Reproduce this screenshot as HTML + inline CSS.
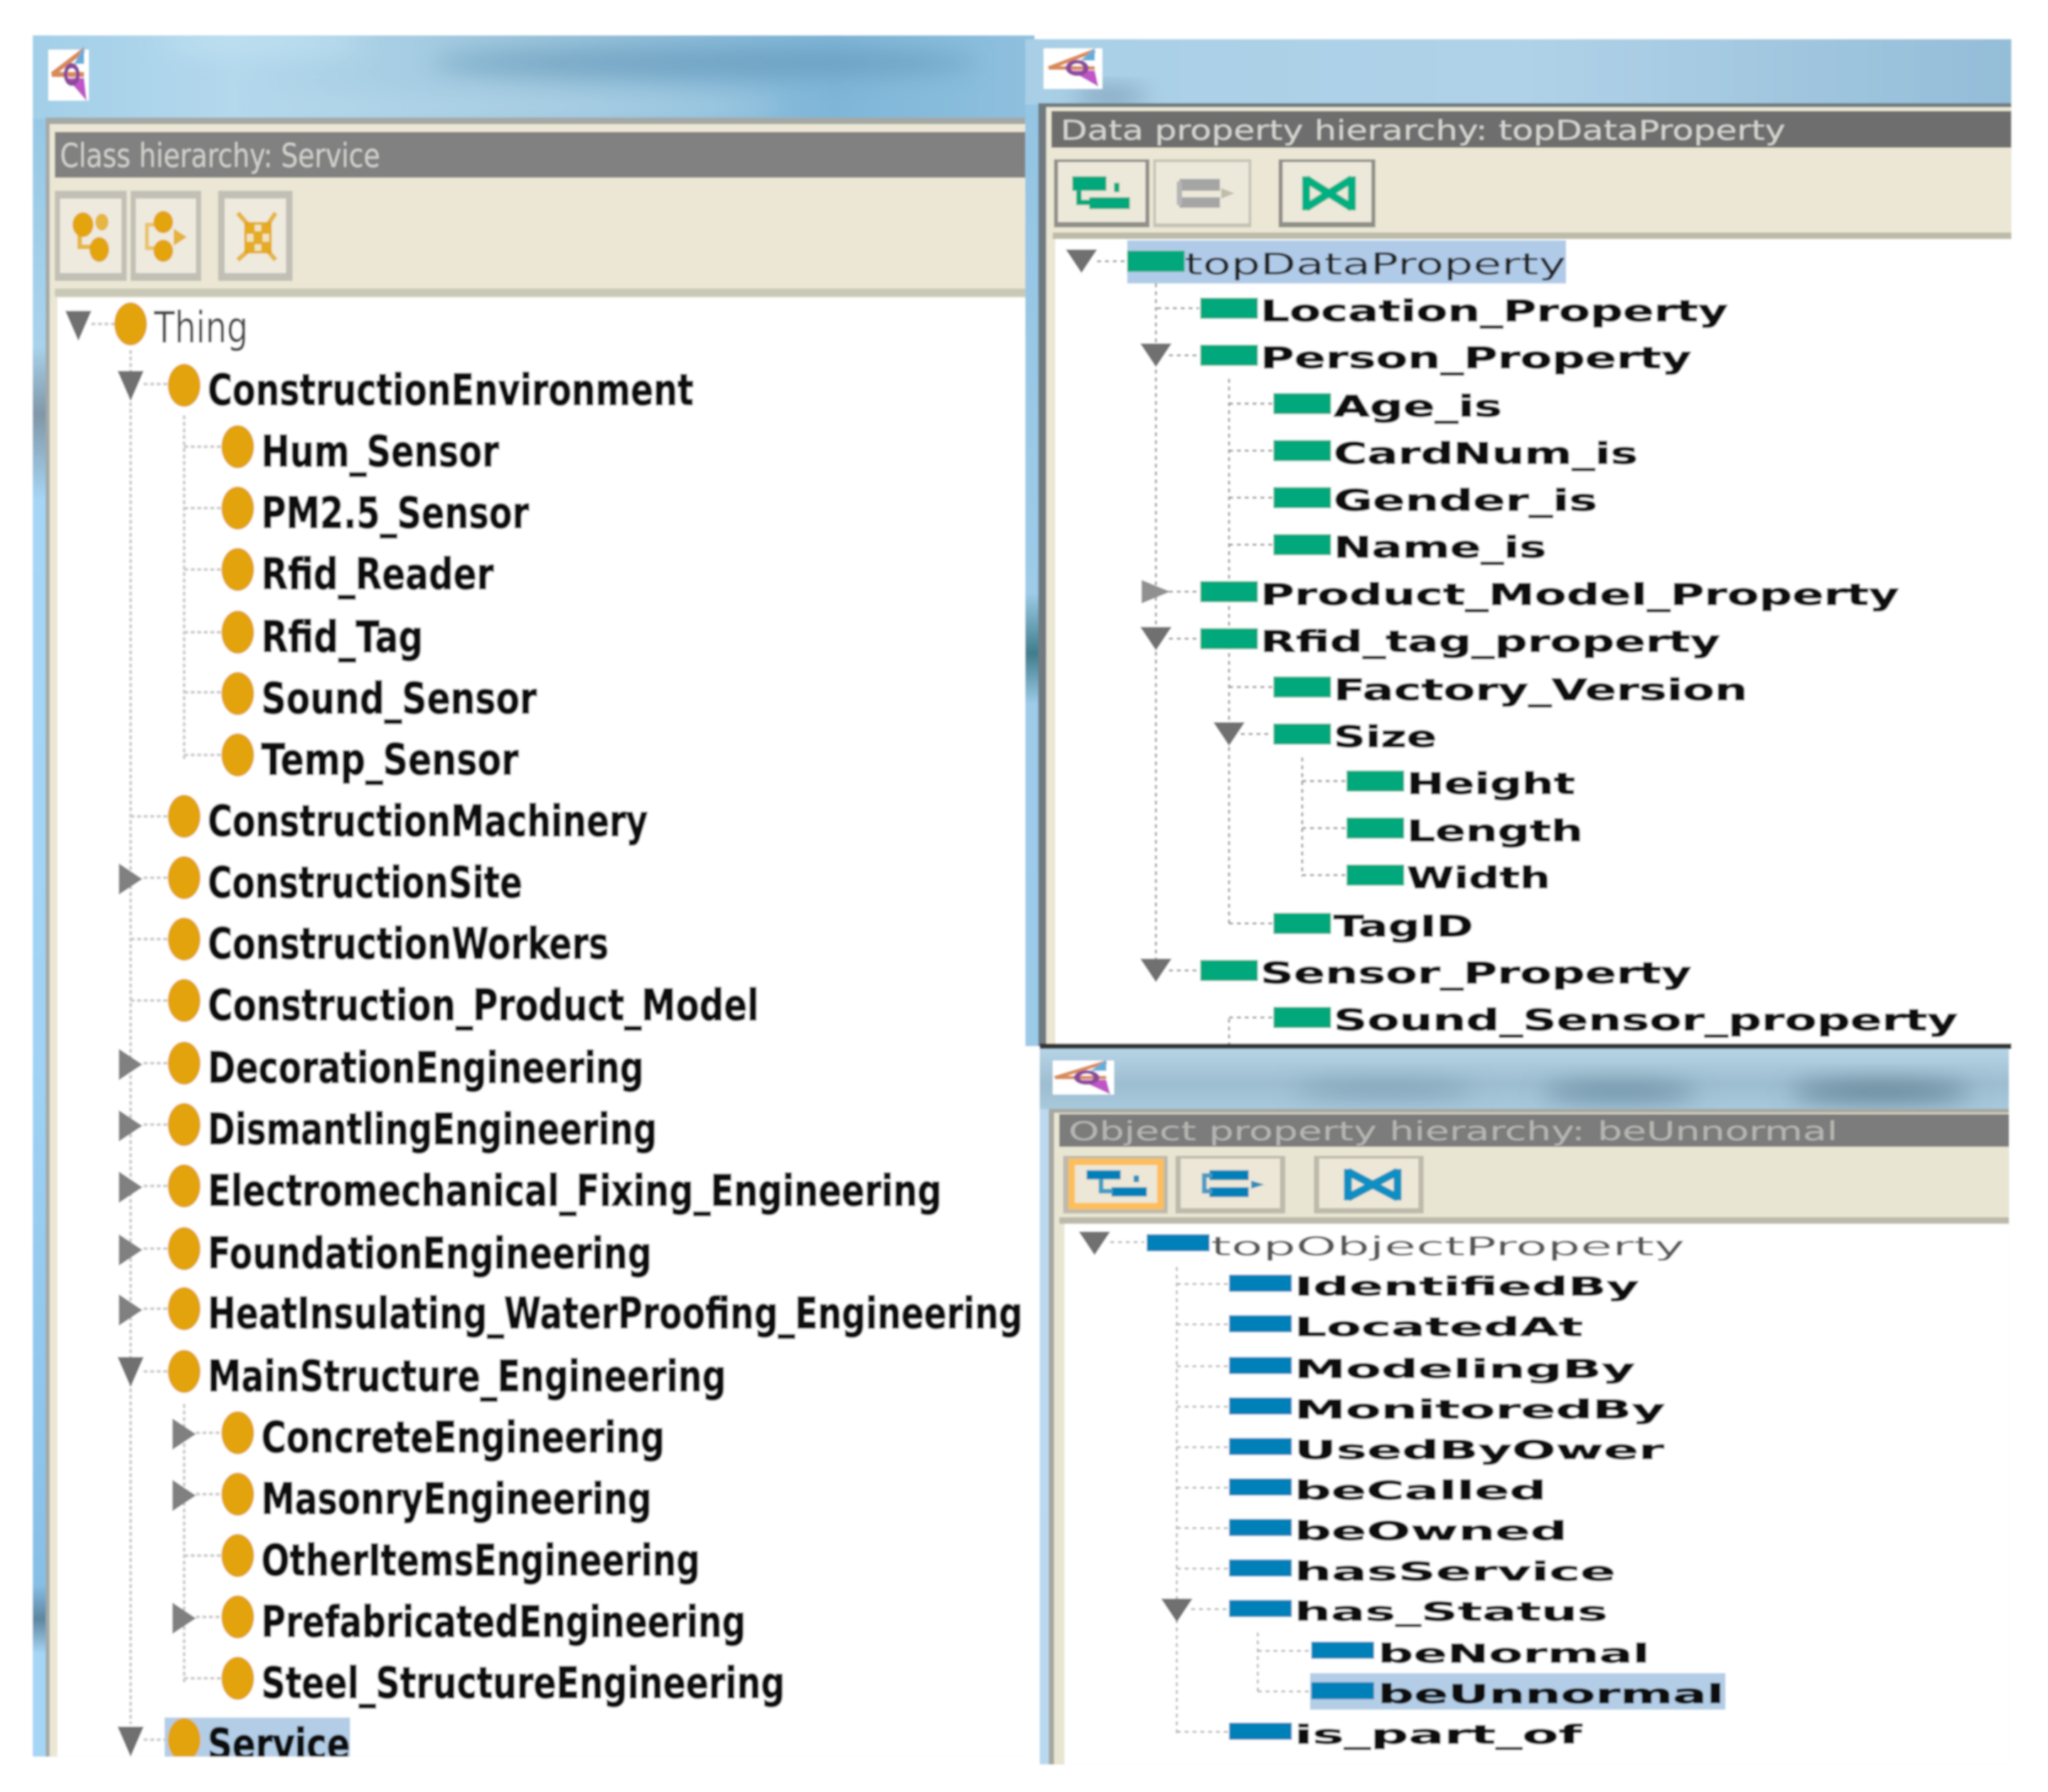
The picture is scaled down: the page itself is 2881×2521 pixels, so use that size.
<!DOCTYPE html>
<html><head><meta charset="utf-8"><title>Ontology hierarchies</title>
<style>
html,body{margin:0;padding:0;background:#fff}
svg{display:block}
text{font-family:"DejaVu Sans","Liberation Sans",sans-serif}
.l{font-size:33px;font-weight:bold;fill:#111;stroke:#111;stroke-width:.7px}
.r{font-size:23px;font-weight:bold;fill:#0c0c0c;stroke:#0c0c0c;stroke-width:.45px}
.o{font-size:20px;font-weight:bold;fill:#111;stroke:#111;stroke-width:.35px}
</style></head><body>
<svg xmlns="http://www.w3.org/2000/svg" width="2881" height="2521" viewBox="0 0 1568 1372">
<defs>
<filter id="b" x="0" y="0" width="100%" height="100%"><feGaussianBlur stdDeviation="0.75"/></filter>
<filter id="bb" x="-30%" y="-100%" width="160%" height="300%"><feGaussianBlur stdDeviation="9"/></filter>
<linearGradient id="t1" x1="0" x2="1" y1="0" y2="0"><stop offset="0" stop-color="#a2cfe8"/><stop offset=".2" stop-color="#b4d8ec"/><stop offset=".5" stop-color="#9cc5dc"/><stop offset=".8" stop-color="#7fb6d8"/><stop offset="1" stop-color="#8fc0de"/></linearGradient>
<linearGradient id="t2" x1="0" x2="1" y1="0" y2="0"><stop offset="0" stop-color="#a8cfe6"/><stop offset=".5" stop-color="#b0d2e8"/><stop offset="1" stop-color="#94bdd8"/></linearGradient>
<linearGradient id="t3" x1="0" x2="0" y1="0" y2="1"><stop offset="0" stop-color="#b8d6e8"/><stop offset=".6" stop-color="#9dbdd0"/><stop offset="1" stop-color="#a8c8dc"/></linearGradient>
<linearGradient id="s1" x1="0" x2="0" y1="0" y2="1"><stop offset="0" stop-color="#8fc4e2"/><stop offset=".18" stop-color="#a9d3ec"/><stop offset=".22" stop-color="#7f97a8"/><stop offset=".27" stop-color="#a6d6f5"/><stop offset=".6" stop-color="#9fd2f4"/><stop offset=".9" stop-color="#86bfe6"/><stop offset=".92" stop-color="#5d86a0"/><stop offset=".94" stop-color="#a6d6f5"/><stop offset="1" stop-color="#a6d6f5"/></linearGradient>
<linearGradient id="s2" x1="0" x2="0" y1="0" y2="1"><stop offset="0" stop-color="#93c4e2"/><stop offset=".55" stop-color="#9dcbe8"/><stop offset=".61" stop-color="#3f7d8c"/><stop offset=".66" stop-color="#9dcbe8"/><stop offset="1" stop-color="#9ccbea"/></linearGradient>
<linearGradient id="s3" x1="0" x2="0" y1="0" y2="1"><stop offset="0" stop-color="#c8dff0"/><stop offset=".04" stop-color="#6f8ea6"/><stop offset=".09" stop-color="#bcd9ee"/><stop offset="1" stop-color="#b8d8f0"/></linearGradient>
<g id="dn"><path d="M-10-11H10L0 12Z" fill="#707070"/></g>
<g id="rt"><path d="M-9-12L9 0L-9 12Z" fill="#808080"/></g>
<g id="dns"><path d="M-12-8H12L0 10Z" fill="#707070"/></g>
<g id="rts"><path d="M-11-9L11 0L-11 9Z" fill="#909090"/></g>
<g id="c"><ellipse rx="12.5" ry="16.5" fill="#e2a30e"/></g>
<g id="g"><rect x="-22" y="-8" width="44" height="16" fill="#00a87c"/></g>
<g id="u"><rect x="-24" y="-7" width="48" height="13" fill="#0080b8"/></g>
<g id="owl"><path d="M12-14L-14 0L12 0" fill="none" stroke="#d98a55" stroke-width="3"/><path d="M12-16L4-6L12-6Z" fill="#62aedb"/><path d="M-2 2L14 15L12 2Z" fill="#c055c8"/><circle cx="2" cy="0" r="5" fill="none" stroke="#8a4a9a" stroke-width="3"/></g>
</defs>
<rect width="1568" height="1372" fill="#fff"/>
<g filter="url(#b)">
<!-- LEFT WINDOW -->
<rect x="25" y="27" width="767" height="1318" fill="#fff"/>
<rect x="25" y="27" width="13" height="1318" fill="url(#s1)"/>
<rect x="25" y="27" width="767" height="64" fill="url(#t1)"/>
<g filter="url(#bb)" opacity=".6"><ellipse cx="540" cy="48" rx="210" ry="11" fill="#5f92b4"/><ellipse cx="200" cy="32" rx="80" ry="10" fill="#c4e4f4"/><ellipse cx="400" cy="82" rx="200" ry="8" fill="#bcdcee"/></g>
<rect x="37" y="38" width="31" height="39" fill="#fff"/>
<use href="#owl" transform="translate(53 57) scale(.95 1.35)"/>
<rect x="35" y="90" width="750" height="1255" fill="#a4a9a6"/>
<rect x="38" y="95" width="747" height="1250" fill="#ebe7d4"/>
<rect x="42" y="101" width="743" height="35" fill="#818181"/>
<text x="46" y="128" font-size="25" fill="#d0d0cc" textLength="245" lengthAdjust="spacingAndGlyphs">Class hierarchy: Service</text>
<rect x="42" y="146" width="55" height="69" fill="#c2c0b6"/><rect x="46" y="152" width="47" height="57" fill="#eeeade"/>
<rect x="100" y="146" width="54" height="69" fill="#c2c0b6"/><rect x="104" y="152" width="46" height="57" fill="#eeeade"/>
<rect x="167" y="146" width="57" height="69" fill="#c2c0b6"/><rect x="172" y="152" width="47" height="57" fill="#eeeade"/>
<g fill="#e3a40f">
<ellipse cx="63.500" cy="172" rx="8" ry="9.500"/><ellipse cx="76" cy="191" rx="7.500" ry="9.500"/><ellipse cx="78" cy="170" rx="5" ry="6.500" opacity=".75"/>
<path d="M61 180V189H70" fill="none" stroke="#e3a40f" stroke-width="3.500" opacity=".75"/>
<ellipse cx="125" cy="170" rx="7.500" ry="8.500"/><ellipse cx="125" cy="192" rx="7.500" ry="8.500"/>
<path d="M120 172H112.500V190H120" fill="none" stroke="#e3a40f" stroke-width="3" opacity=".55"/><path d="M133 175L143 181.500L133 188Z" opacity=".8"/>
<rect x="187" y="170" width="21" height="24" opacity=".9"/>
<path d="M182 163L190 172M211 163L205 172M182 199L190 192M211 199L205 192" stroke="#e3a40f" stroke-width="3.500" opacity=".75"/>
</g>
<g fill="#f0e4c0"><rect x="195" y="172" width="5" height="5"/><rect x="195" y="187" width="5" height="5"/><rect x="189" y="179" width="5" height="6"/><rect x="201" y="179" width="5" height="6"/></g>
<rect x="42" y="221" width="743" height="6" fill="#c9c7b6"/>
<rect x="44" y="228" width="752" height="1117" fill="#fff"/>
<rect x="126" y="1315" width="142" height="30" fill="#b3cde6"/>
<g stroke="#c8c8c8" stroke-width="2" stroke-dasharray="3 2" fill="none">
<path d="M100 268V1320M141 318V581M141 1075V1288"/>
<path d="M70 248H88M110 294H129M141 342H170M141 389H170M141 436H170M141 484H170M141 530H170M141 578H170M100 625H129M110 672H129M100 719H129M100 766H129M110 814H129M110 861H129M110 908H129M110 956H129M110 1002H129M110 1050H129M150 1097H170M150 1144H170M141 1191H170M150 1238H170M141 1285H170M110 1332H126"/>
</g>
<use href="#dn" x="60" y="249"/><use href="#dn" x="100" y="295"/>
<use href="#rt" x="100" y="673"/><use href="#rt" x="100" y="815"/><use href="#rt" x="100" y="862"/><use href="#rt" x="100" y="909"/><use href="#rt" x="100" y="957"/><use href="#rt" x="100" y="1003"/>
<use href="#dn" x="100" y="1050"/><use href="#rt" x="141" y="1098"/><use href="#rt" x="141" y="1145"/><use href="#rt" x="141" y="1239"/><use href="#dn" x="100" y="1333"/>
<use href="#c" x="100" y="248"/><use href="#c" x="141" y="295"/>
<use href="#c" x="182" y="342"/><use href="#c" x="182" y="389"/><use href="#c" x="182" y="436"/><use href="#c" x="182" y="484"/><use href="#c" x="182" y="531"/><use href="#c" x="182" y="578"/>
<use href="#c" x="141" y="625"/><use href="#c" x="141" y="672"/><use href="#c" x="141" y="719"/><use href="#c" x="141" y="766"/><use href="#c" x="141" y="814"/><use href="#c" x="141" y="861"/><use href="#c" x="141" y="908"/><use href="#c" x="141" y="956"/><use href="#c" x="141" y="1002"/><use href="#c" x="141" y="1050"/>
<use href="#c" x="182" y="1097"/><use href="#c" x="182" y="1144"/><use href="#c" x="182" y="1191"/><use href="#c" x="182" y="1238"/><use href="#c" x="182" y="1285"/><use href="#c" x="141" y="1332"/>
<text x="118" y="262" font-size="33" fill="#444" textLength="72" lengthAdjust="spacingAndGlyphs">Thing</text>
<g transform="translate(0 2)">
<text class="l" x="159" y="308" textLength="372" lengthAdjust="spacingAndGlyphs">ConstructionEnvironment</text>
<text class="l" x="200" y="355" textLength="182" lengthAdjust="spacingAndGlyphs">Hum_Sensor</text>
<text class="l" x="200" y="402" textLength="205" lengthAdjust="spacingAndGlyphs">PM2.5_Sensor</text>
<text class="l" x="200" y="449" textLength="178" lengthAdjust="spacingAndGlyphs">Rfid_Reader</text>
<text class="l" x="200" y="497" textLength="124" lengthAdjust="spacingAndGlyphs">Rfid_Tag</text>
<text class="l" x="200" y="544" textLength="211" lengthAdjust="spacingAndGlyphs">Sound_Sensor</text>
<text class="l" x="200" y="591" textLength="197" lengthAdjust="spacingAndGlyphs">Temp_Sensor</text>
<text class="l" x="159" y="638" textLength="337" lengthAdjust="spacingAndGlyphs">ConstructionMachinery</text>
<text class="l" x="159" y="685" textLength="241" lengthAdjust="spacingAndGlyphs">ConstructionSite</text>
<text class="l" x="159" y="732" textLength="307" lengthAdjust="spacingAndGlyphs">ConstructionWorkers</text>
<text class="l" x="159" y="779" textLength="422" lengthAdjust="spacingAndGlyphs">Construction_Product_Model</text>
<text class="l" x="159" y="827" textLength="334" lengthAdjust="spacingAndGlyphs">DecorationEngineering</text>
<text class="l" x="159" y="874" textLength="344" lengthAdjust="spacingAndGlyphs">DismantlingEngineering</text>
<text class="l" x="159" y="921" textLength="562" lengthAdjust="spacingAndGlyphs">Electromechanical_Fixing_Engineering</text>
<text class="l" x="159" y="969" textLength="340" lengthAdjust="spacingAndGlyphs">FoundationEngineering</text>
<text class="l" x="159" y="1015" textLength="624" lengthAdjust="spacingAndGlyphs">HeatInsulating_WaterProofing_Engineering</text>
<text class="l" x="159" y="1063" textLength="397" lengthAdjust="spacingAndGlyphs">MainStructure_Engineering</text>
<text class="l" x="200" y="1110" textLength="309" lengthAdjust="spacingAndGlyphs">ConcreteEngineering</text>
<text class="l" x="200" y="1157" textLength="299" lengthAdjust="spacingAndGlyphs">MasonryEngineering</text>
<text class="l" x="200" y="1204" textLength="336" lengthAdjust="spacingAndGlyphs">OtherItemsEngineering</text>
<text class="l" x="200" y="1251" textLength="371" lengthAdjust="spacingAndGlyphs">PrefabricatedEngineering</text>
<text class="l" x="200" y="1298" textLength="401" lengthAdjust="spacingAndGlyphs">Steel_StructureEngineering</text>
<text class="l" x="159" y="1345" textLength="109" lengthAdjust="spacingAndGlyphs">Service</text>
</g>
<rect x="0" y="1345" width="800" height="27" fill="#fff"/>
<rect x="0" y="0" width="25" height="1372" fill="#fff"/>
<rect x="0" y="0" width="1568" height="27" fill="#fff"/>

<!-- TOP RIGHT WINDOW -->
<rect x="785" y="30" width="11" height="771" fill="url(#s2)"/>
<rect x="785" y="30" width="755" height="50" fill="url(#t2)"/>
<g filter="url(#bb)"><ellipse cx="850" cy="74" rx="28" ry="5" fill="#6f8fa6"/></g>
<rect x="799" y="37" width="45" height="31" fill="#fff"/>
<use href="#owl" transform="translate(822 52) scale(1.35 .95)"/>
<rect x="795" y="79" width="745" height="722" fill="#6f7a80"/>
<rect x="801" y="82" width="739" height="719" fill="#ebe7d4"/>
<rect x="805" y="85" width="735" height="28" fill="#6e6e6e"/>
<text x="812" y="107" font-size="21" fill="#d4d4d0" textLength="555" lengthAdjust="spacingAndGlyphs">Data property hierarchy: topDataProperty</text>
<rect x="807" y="122" width="73" height="52" fill="#8f8f88"/><rect x="810" y="124" width="67" height="46" fill="#ece8da"/>
<rect x="883" y="122" width="75" height="52" fill="#c4c2b6"/><rect x="885" y="124" width="71" height="47" fill="#ece8da"/>
<rect x="979" y="122" width="74" height="52" fill="#8f8f88"/><rect x="982" y="124" width="68" height="46" fill="#ece8da"/>
<rect x="821" y="135" width="26" height="11" fill="#00a87c"/><rect x="834" y="151" width="31" height="9" fill="#00a87c"/><path d="M826 146V155H836" fill="none" stroke="#00a87c" stroke-width="4"/><rect x="853" y="140" width="4" height="7" fill="#00a87c"/>
<rect x="903" y="137" width="31" height="9" fill="#a5a5a5"/><rect x="903" y="151" width="31" height="8" fill="#a5a5a5"/><path d="M903 139V157" stroke="#b5b5b5" stroke-width="4"/><path d="M935 144L945 148L935 152Z" fill="#bdbdaa"/>
<path d="M1000 137L1035 159M1035 137L1000 159M1000 135V161M1035 135V161" fill="none" stroke="#00b082" stroke-width="6"/>
<rect x="806" y="178" width="734" height="5" fill="#bdbaa8"/>
<rect x="808" y="183" width="732" height="618" fill="#fff"/>
<rect x="863" y="184" width="336" height="33" fill="#b0cbe8"/>
<g stroke="#999" stroke-width="1.500" stroke-dasharray="3 3" fill="none">
<path d="M885 217V745M941 290V708M997 580V671"/>
<path d="M840 200H862M886 236H918M895 272H918M941 309H974M941 345H974M941 381H974M941 417H974M895 453H918M895 489H918M941 526H974M950 562H974M997 598H1030M997 634H1030M997 670H1030M941 707H974M895 743H918M941 779H974M941 780V800"/>
</g>
<use href="#dns" x="828" y="199"/><use href="#dns" x="885" y="271"/><use href="#rts" x="885" y="453"/><use href="#dns" x="885" y="488"/><use href="#dns" x="941" y="561"/><use href="#dns" x="885" y="742"/>
<use href="#g" x="885" y="200"/><use href="#g" x="941" y="236"/><use href="#g" x="941" y="272"/><use href="#g" x="997" y="309"/><use href="#g" x="997" y="345"/><use href="#g" x="997" y="381"/><use href="#g" x="997" y="417"/><use href="#g" x="941" y="453"/><use href="#g" x="941" y="489"/><use href="#g" x="997" y="526"/><use href="#g" x="997" y="562"/><use href="#g" x="1053" y="598"/><use href="#g" x="1053" y="634"/><use href="#g" x="1053" y="670"/><use href="#g" x="997" y="707"/><use href="#g" x="941" y="743"/><use href="#g" x="997" y="779"/>
<text x="907" y="210" font-size="23" fill="#222" textLength="292" lengthAdjust="spacingAndGlyphs">topDataProperty</text>
<text class="r" x="965" y="246" textLength="358" lengthAdjust="spacingAndGlyphs">Location_Property</text>
<text class="r" x="965" y="282" textLength="330" lengthAdjust="spacingAndGlyphs">Person_Property</text>
<text class="r" x="1021" y="319" textLength="129" lengthAdjust="spacingAndGlyphs">Age_is</text>
<text class="r" x="1021" y="355" textLength="233" lengthAdjust="spacingAndGlyphs">CardNum_is</text>
<text class="r" x="1021" y="391" textLength="202" lengthAdjust="spacingAndGlyphs">Gender_is</text>
<text class="r" x="1021" y="427" textLength="163" lengthAdjust="spacingAndGlyphs">Name_is</text>
<text class="r" x="965" y="463" textLength="489" lengthAdjust="spacingAndGlyphs">Product_Model_Property</text>
<text class="r" x="965" y="499" textLength="352" lengthAdjust="spacingAndGlyphs">Rfid_tag_property</text>
<text class="r" x="1021" y="536" textLength="317" lengthAdjust="spacingAndGlyphs">Factory_Version</text>
<text class="r" x="1021" y="572" textLength="79" lengthAdjust="spacingAndGlyphs">Size</text>
<text class="r" x="1077" y="608" textLength="129" lengthAdjust="spacingAndGlyphs">Height</text>
<text class="r" x="1077" y="644" textLength="135" lengthAdjust="spacingAndGlyphs">Length</text>
<text class="r" x="1077" y="680" textLength="110" lengthAdjust="spacingAndGlyphs">Width</text>
<text class="r" x="1021" y="717" textLength="107" lengthAdjust="spacingAndGlyphs">TagID</text>
<text class="r" x="965" y="753" textLength="330" lengthAdjust="spacingAndGlyphs">Sensor_Property</text>
<text class="r" x="1021" y="789" textLength="478" lengthAdjust="spacingAndGlyphs">Sound_Sensor_property</text>

<!-- BOTTOM RIGHT WINDOW -->
<rect x="796" y="801" width="8" height="550" fill="url(#s3)"/>
<rect x="796" y="801" width="742" height="48" fill="url(#t3)"/>
<g filter="url(#bb)"><ellipse cx="1060" cy="834" rx="70" ry="5" fill="#7596ab"/><ellipse cx="1240" cy="836" rx="60" ry="6" fill="#5f8296"/><ellipse cx="1440" cy="836" rx="70" ry="7" fill="#567789"/></g>
<rect x="796" y="799" width="744" height="4" fill="#343434"/>
<rect x="806" y="812" width="47" height="26" fill="#fff"/>
<use href="#owl" transform="translate(829 825) scale(1.5 .85)"/>
<rect x="803" y="849" width="735" height="502" fill="#a6a7a0"/>
<rect x="807" y="852" width="731" height="499" fill="#e8e5d2"/>
<rect x="811" y="853" width="727" height="25" fill="#7b7b7b"/>
<text x="818" y="873" font-size="20" fill="#b5b5b2" textLength="589" lengthAdjust="spacingAndGlyphs">Object property hierarchy: beUnnormal</text>
<rect x="814" y="885" width="80" height="44" fill="#bdb9ac"/><rect x="818" y="887" width="73" height="39" fill="#fdbf5c"/><rect x="823" y="892" width="63" height="29" fill="#ece7d6"/>
<rect x="900" y="885" width="84" height="44" fill="#bdb9ac"/><rect x="904" y="887" width="76" height="38" fill="#ece7d6"/>
<rect x="1006" y="885" width="84" height="44" fill="#bdb9ac"/><rect x="1010" y="887" width="76" height="38" fill="#ece7d6"/>
<rect x="832" y="896" width="26" height="7" fill="#0080b8"/><rect x="851" y="909" width="27" height="7" fill="#0080b8"/><path d="M843 903V912H852" fill="none" stroke="#3f9cc4" stroke-width="3.500"/><rect x="868" y="900" width="4" height="5" fill="#2a8cba"/>
<rect x="926" y="896" width="30" height="7.500" fill="#0080b8"/><rect x="926" y="909" width="30" height="7.500" fill="#0080b8"/><path d="M928 900H922V912H928" fill="none" stroke="#4a9ac4" stroke-width="3.500"/><path d="M958 904L968 907L958 910Z" fill="#2a8cba"/>
<path d="M1032 897L1070 917M1070 897L1032 917M1032 895V919M1070 895V919" fill="none" stroke="#0a8fc2" stroke-width="6"/>
<rect x="811" y="932" width="727" height="5" fill="#bcb9aa"/>
<rect x="815" y="937" width="723" height="414" fill="#fff"/>
<rect x="1003" y="1281" width="318" height="28" fill="#b3cde6"/>
<g stroke="#b8b8b8" stroke-width="1.500" stroke-dasharray="3 3" fill="none">
<path d="M901 970V1330M963 1250V1295"/>
<path d="M850 951H876M901 983H940M901 1014H940M901 1046H940M901 1077H940M901 1108H940M901 1139H940M901 1170H940M901 1201H940M912 1232H940M963 1264H1002M963 1295H1002M901 1326H940"/>
</g>
<use href="#dns" x="838" y="951"/><use href="#dns" x="901" y="1232"/>
<use href="#u" x="902" y="952"/>
<use href="#u" x="965" y="983"/><use href="#u" x="965" y="1014"/><use href="#u" x="965" y="1046"/><use href="#u" x="965" y="1077"/><use href="#u" x="965" y="1108"/><use href="#u" x="965" y="1139"/><use href="#u" x="965" y="1170"/><use href="#u" x="965" y="1201"/><use href="#u" x="965" y="1232"/>
<use href="#u" x="1028" y="1264"/><use href="#u" x="1028" y="1295"/><use href="#u" x="965" y="1326"/>
<text x="927" y="961" font-size="20" fill="#555" textLength="363" lengthAdjust="spacingAndGlyphs">topObjectProperty</text>
<text class="o" x="991" y="992" textLength="264" lengthAdjust="spacingAndGlyphs">IdentifiedBy</text>
<text class="o" x="991" y="1023" textLength="221" lengthAdjust="spacingAndGlyphs">LocatedAt</text>
<text class="o" x="991" y="1055" textLength="261" lengthAdjust="spacingAndGlyphs">ModelingBy</text>
<text class="o" x="991" y="1086" textLength="284" lengthAdjust="spacingAndGlyphs">MonitoredBy</text>
<text class="o" x="991" y="1117" textLength="283" lengthAdjust="spacingAndGlyphs">UsedByOwer</text>
<text class="o" x="991" y="1148" textLength="193" lengthAdjust="spacingAndGlyphs">beCalled</text>
<text class="o" x="991" y="1179" textLength="209" lengthAdjust="spacingAndGlyphs">beOwned</text>
<text class="o" x="991" y="1210" textLength="246" lengthAdjust="spacingAndGlyphs">hasService</text>
<text class="o" x="991" y="1241" textLength="240" lengthAdjust="spacingAndGlyphs">has_Status</text>
<text class="o" x="1055" y="1273" textLength="208" lengthAdjust="spacingAndGlyphs">beNormal</text>
<text class="o" x="1055" y="1304" textLength="265" lengthAdjust="spacingAndGlyphs">beUnnormal</text>
<text class="o" x="991" y="1335" textLength="220" lengthAdjust="spacingAndGlyphs">is_part_of</text>
<rect x="790" y="1351" width="778" height="21" fill="#fff"/>
<rect x="1540" y="0" width="28" height="1372" fill="#fff"/>
</g>
</svg>
</body></html>
